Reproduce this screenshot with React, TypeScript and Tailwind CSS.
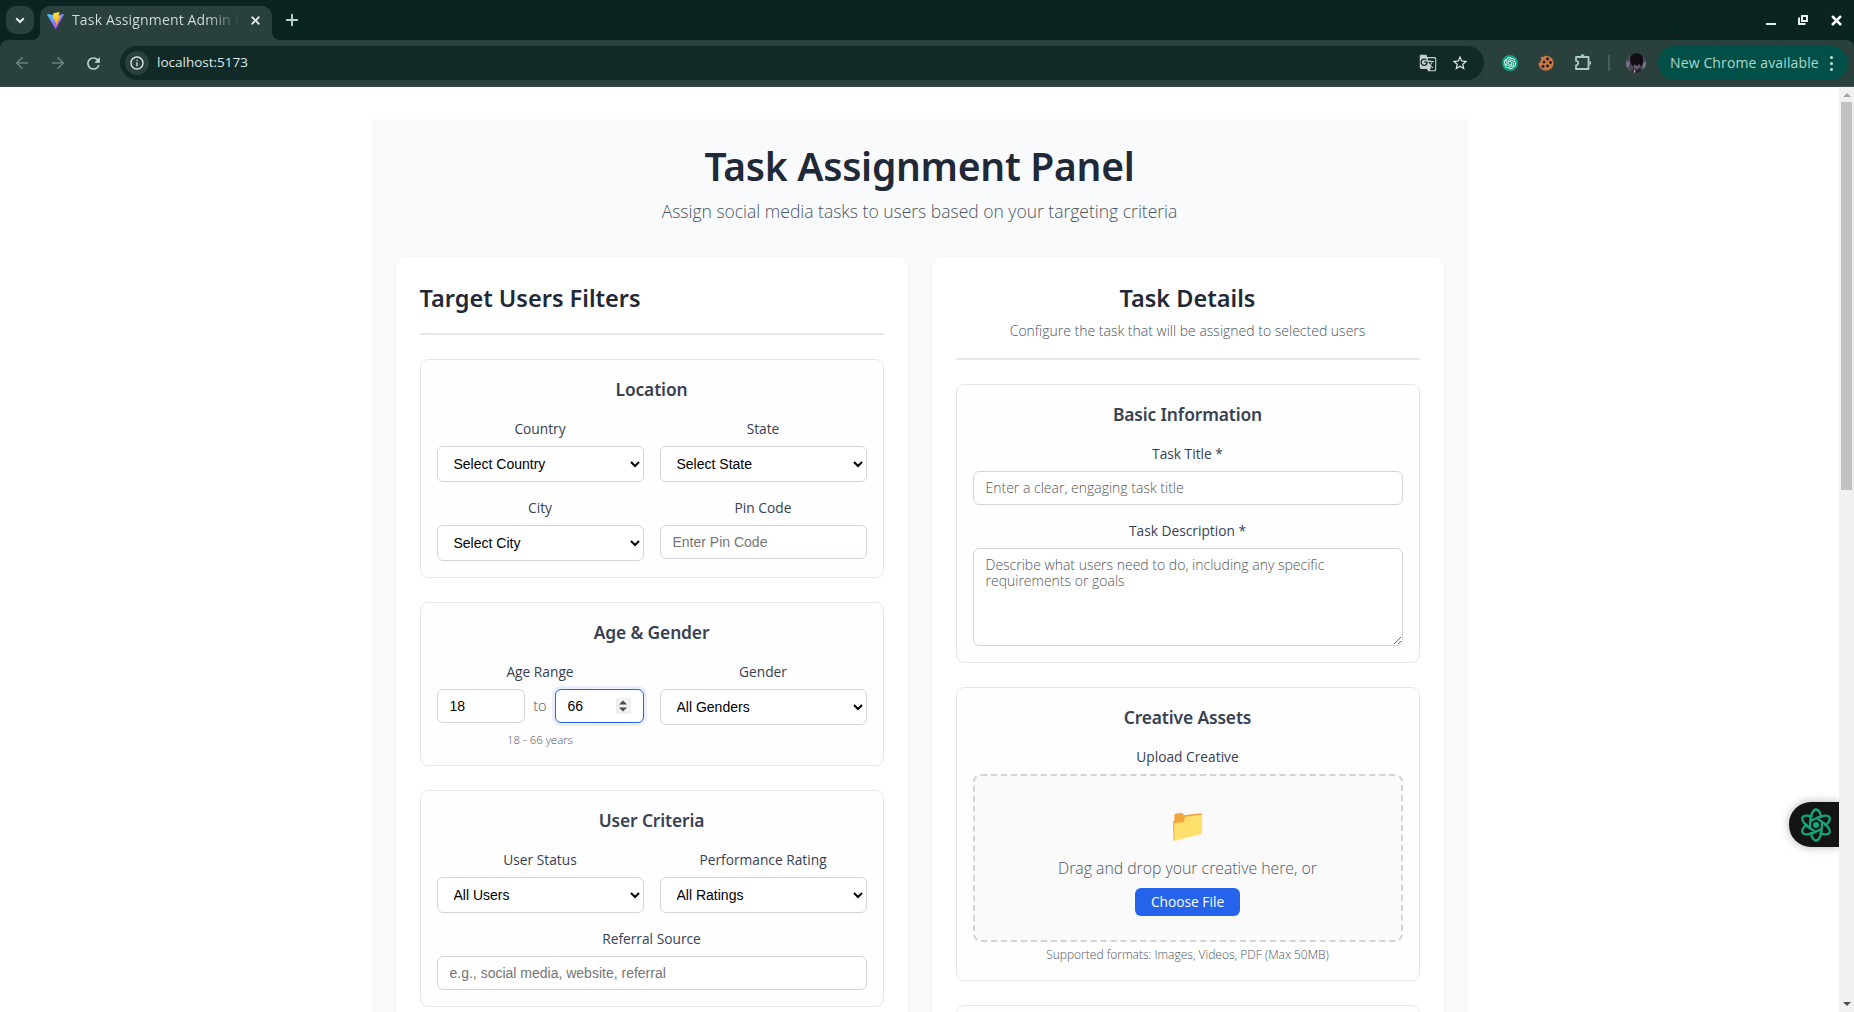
import React from "react";
import { ArrowLeft, ArrowRight, Plus, X } from "lucide-react";
import { MdGTranslate, MdInfoOutline, MdRefresh, MdStarOutline } from "react-icons/md";

function ViteLogo() {
  return (
    <svg viewBox="0 0 32 32" className="h-[17px] w-[17px] shrink-0">
      <defs>
        <linearGradient id="va" x1="0" y1="0" x2="0.7" y2="1">
          <stop offset="0" stopColor="#41d1ff" />
          <stop offset="1" stopColor="#bd34fe" />
        </linearGradient>
        <linearGradient id="vb" x1="0.4" y1="0" x2="0.6" y2="1">
          <stop offset="0" stopColor="#ffea83" />
          <stop offset="0.1" stopColor="#ffdd35" />
          <stop offset="1" stopColor="#ffa800" />
        </linearGradient>
      </defs>
      <path fill="url(#va)" d="M31.8 5.2 17 31.5a.9.9 0 0 1-1.6 0L.3 5.2A.9.9 0 0 1 1.2 3.800l14.800 2.600 14.900-2.600a.9.9 0 0 1 .9 1.400Z" />
      <path fill="url(#vb)" d="M23 .1 12.200 2.200a.4.4 0 0 0-.3.4l-.7 11.200a.4.4 0 0 0 .5.4l3-.7a.4.4 0 0 1 .5.5l-.9 4.400a.4.4 0 0 0 .5.5l1.900-.6a.4.4 0 0 1 .5.5l-1.400 6.900c-.1.4.5.700.8.300l.1-.3 8.800-17.500a.4.4 0 0 0-.4-.6l-3.100.6a.4.4 0 0 1-.5-.5l2-7a.4.4 0 0 0-.5-.6Z" />
    </svg>
  );
}

function Knot({ className }: { className: string }) {
  return (
    <svg viewBox="0 0 24 24" className={className} fill="currentColor">
      <path d="M22.282 9.821a5.985 5.985 0 0 0-.516-4.910 6.046 6.046 0 0 0-6.510-2.900A6.065 6.065 0 0 0 4.981 4.182a5.985 5.985 0 0 0-3.998 2.900 6.046 6.046 0 0 0 .743 7.097 5.980 5.980 0 0 0 .510 4.911 6.051 6.051 0 0 0 6.515 2.900A5.985 5.985 0 0 0 13.260 24a6.056 6.056 0 0 0 5.772-4.206 5.990 5.990 0 0 0 3.998-2.900 6.056 6.056 0 0 0-.748-7.073zM13.260 22.430a4.476 4.476 0 0 1-2.876-1.041l.142-.080 4.778-2.758a.795.795 0 0 0 .393-.682v-6.737l2.020 1.169a.071.071 0 0 1 .038.052v5.583a4.504 4.504 0 0 1-4.495 4.494zM3.600 18.304a4.471 4.471 0 0 1-.535-3.014l.142.085 4.783 2.758a.771.771 0 0 0 .780 0l5.843-3.368v2.332a.080.080 0 0 1-.033.062L9.740 19.950a4.500 4.500 0 0 1-6.140-1.646zM2.341 7.896a4.485 4.485 0 0 1 2.365-1.973V11.600a.766.766 0 0 0 .388.676l5.814 3.355-2.020 1.168a.076.076 0 0 1-.071 0l-4.830-2.786A4.504 4.504 0 0 1 2.341 7.872zm16.597 3.856-5.833-3.387L15.119 7.200a.076.076 0 0 1 .071 0l4.830 2.791a4.494 4.494 0 0 1-.676 8.105v-5.678a.790.790 0 0 0-.407-.667zm2.010-3.023-.142-.085-4.773-2.782a.776.776 0 0 0-.785 0L9.409 9.230V6.897a.066.066 0 0 1 .028-.061l4.830-2.787a4.499 4.499 0 0 1 6.680 4.660zM8.306 12.863l-2.020-1.164a.080.080 0 0 1-.038-.057V6.074a4.499 4.499 0 0 1 7.376-3.453l-.142.080L8.704 5.459a.795.795 0 0 0-.393.682zm1.097-2.365 2.602-1.500 2.607 1.500v2.999l-2.597 1.500-2.607-1.500z" />
    </svg>
  );
}

function Cookie() {
  return (
    <svg viewBox="0 0 16 16" className="h-4 w-4">
      <path fill="#c67947" d="M4 1.200c.8 1.300 2 .9 2.600-.4C11 0 15.600 3 15.600 8c0 4.400-3.400 7.600-7.600 7.600S.4 12.400.4 8.300c1.500 0 2-1 1.500-2.300C3.800 5.800 3.700 3.700 2.600 3.300Z" />
      <g fill="#1d1712">
        <circle cx="9.500" cy="4" r="1.400" />
        <circle cx="6" cy="7" r="1.300" />
        <circle cx="12.500" cy="7.500" r="1.400" />
        <circle cx="5" cy="11.500" r="1.400" />
        <circle cx="9.500" cy="11" r="1.400" />
      </g>
    </svg>
  );
}

function Avatar() {
  return (
    <svg viewBox="0 0 20 20" className="h-5 w-5">
      <defs>
        <clipPath id="av"><circle cx="10" cy="10" r="10" /></clipPath>
      </defs>
      <g clipPath="url(#av)">
        <rect width="20" height="20" fill="#4b4a5c" />
        <path fill="#77748b" d="M0 7l4 3-2 5H0ZM20 8l-4 3 1 5 3-2Z" />
        <path fill="#100d14" d="M5 2 9 0h5l3 4v7l-2 3-1-3-3 2-3-2-1 3-2-3-1-5Z" />
        <path fill="#6d5a66" d="M8 12l3 1 3-2-1 4-3 1-2-2Z" />
        <path fill="#25222f" d="M4 20l4-5 3 2 3-2 3 5Z" />
        <path fill="#c39a86" d="m8 16 1.500 1.500L9 20H7.500Z" />
      </g>
    </svg>
  );
}

function Browser() {
  return (
    <header className="h-[87px] shrink-0 bg-[#0a2421] font-['Open_Sans',sans-serif]">
      <div className="flex h-10 items-start pt-1.5 pl-1.5">
        <div className="flex h-7 w-7 items-center justify-center rounded-[10px] bg-[#29403d]">
          <svg viewBox="0 0 10 10" className="h-2.5 w-2.5" fill="none" stroke="#e0ebe9" strokeWidth="2"><path d="m1.200 3.200 3.800 3.800 3.800-3.800" /></svg>
        </div>
        <div className="relative ml-1.5 flex h-[34px] w-[232px] items-center rounded-t-[10px] bg-[#29403d] pb-1.5 pl-[7px]">
          <svg viewBox="0 0 8 8" className="absolute bottom-0 -left-2 h-2 w-2"><path d="M8 0v8H0a8 8 0 0 0 8-8Z" fill="#29403d" /></svg>
          <svg viewBox="0 0 8 8" className="absolute -right-2 bottom-0 h-2 w-2"><path d="M0 0v8h8a8 8 0 0 1-8-8Z" fill="#29403d" /></svg>
          <ViteLogo />
          <span className="ml-2 w-[168px] overflow-hidden bg-linear-to-r from-[#d4e0de] from-80% to-transparent to-100% bg-clip-text text-[14px] leading-5 tracking-[0.155px] whitespace-nowrap text-transparent">Task Assignment Admin P</span>
          <X className="ml-[9px] h-[13px] w-[13px] text-[#e0ebe9]" strokeWidth={3.300} />
        </div>
        <Plus className="mt-1 ml-2.5 h-5 w-5 p-[1px] text-[#bcd0cc]" strokeWidth={2.6} />
        <div className="mr-2.5 ml-auto flex h-7 items-center text-white">
          <span className="mt-2 mr-[22px] h-0.5 w-2.5 bg-[#e8f0ee]" />
          <svg viewBox="0 0 10 10" className="mr-[21px] h-2.5 w-2.5" fill="none" stroke="#e8f0ee" strokeWidth="2"><path d="M4 1h5v5H4ZM1 2.500V9h6.500" /></svg>
          <X className="h-[15px] w-[15px]" strokeWidth={4} />
        </div>
      </div>
      <div className="flex h-[47px] items-center rounded-t-lg border-b border-[#3b504d] bg-[#29403d]">
        <ArrowLeft className="ml-[13px] h-[18px] w-[18px] text-[#6a7f7b]" strokeWidth={2.300} />
        <ArrowRight className="ml-[18px] h-[18px] w-[18px] text-[#6a7f7b]" strokeWidth={2.300} />
        <MdRefresh className="ml-[17px] h-[19px] w-[19px] text-[#c0dcd6]" />
        <div className="ml-[17px] flex h-[34px] w-[1364px] items-center rounded-full bg-[#112a27] pl-[5px]">
          <span className="flex h-6 w-6 items-center justify-center rounded-full bg-[#29403d]">
            <MdInfoOutline className="h-4 w-4 text-[#dde9e7]" />
          </span>
          <span className="ml-2 pb-0.5 text-[13.5px] text-[#dce8e6]">localhost:5173</span>
          <MdGTranslate className="ml-auto h-[18px] w-[18px] text-[#c3cfcd]" />
          <MdStarOutline className="mr-[15px] ml-[14px] h-[18px] w-[18px] text-[#dce8e6]" />
        </div>
        <span className="ml-[18px] flex h-4 w-4 items-center justify-center rounded-full bg-[#10a37f] text-white">
          <Knot className="h-3 w-3" />
        </span>
        <span className="ml-5"><Cookie /></span>
        <svg viewBox="0 0 18 18" className="ml-5 h-[18px] w-[18px]" fill="none" stroke="#a9cbc4" strokeWidth="1.800" strokeLinejoin="round">
          <path d="M2 3h12.500v12H2v-3.700c3-.6 3-4 0-4.600Z" />
          <path d="M6.500 2.300a2 2 0 0 1 4 0ZM15.300 7a2 2 0 0 1 0 4Z" fill="#a9cbc4" stroke="none" />
        </svg>
        <span className="ml-4 h-4 w-0.5 bg-[#40605b]" />
        <span className="ml-4"><Avatar /></span>
        <div className="ml-3 flex h-[34px] w-[190px] items-center rounded-full bg-[#005047] pl-3 text-[#a9d8cf]">
          <span className="pb-0.5 text-[14px] tracking-[0.13px] whitespace-nowrap">New Chrome available</span>
          <span className="ml-[11px] flex flex-col gap-[3px]">
            <i className="h-[3px] w-[3px] rounded-full bg-[#bfe5dd]" />
            <i className="h-[3px] w-[3px] rounded-full bg-[#bfe5dd]" />
            <i className="h-[3px] w-[3px] rounded-full bg-[#bfe5dd]" />
          </span>
        </div>
      </div>
    </header>
  );
}

const control =
  "block w-full rounded-md border border-[#d1d5db] bg-white text-[14px] text-black outline-none";
const arial = "font-['Liberation_Sans',Arial,sans-serif] placeholder:text-[#757575]";
const light = "font-['Open_Sans',sans-serif] font-light placeholder:text-[#555555]";
const heading = "font-['Noto_Sans',sans-serif] font-semibold";

function Section({ title, children }: { title?: string; children?: React.ReactNode }) {
  return (
    <section className="mb-6 min-h-20 rounded-lg border border-[#e5e7eb] bg-[#fefefe] p-4">
      {title && (
        <h3 className={`${heading} mb-4 h-[27px] text-center text-[17.4px] leading-[27px] tracking-[-0.13px] text-[#374151]`}>{title}</h3>
      )}
      {children}
    </section>
  );
}

function Field({ label, className = "", children }: { label: string; className?: string; children: React.ReactNode }) {
  return (
    <div className={className}>
      <label className="mb-2 block text-center text-[13.75px] leading-[19px] font-medium text-[#374151]">{label}</label>
      {children}
    </div>
  );
}

function Select({ value }: { value: string }) {
  return (
    <select className={`${control} ${arial} h-9 px-3`}>
      <option>{value}</option>
    </select>
  );
}

function Folder() {
  return (
    <svg viewBox="0 0 30 30" className="h-[30px] w-[30px]">
      <path fill="#f2a63f" d="M.6 28.500 0 10 1.400 8V3q0-1.300 1.300-1.500L9 .9q1.500 0 1.600 1.400v1L28 1.200q1 0 1 1v5L1 28.700Z" />
      <path fill="#ffe06c" d="M1.300 12q0-1 1-1.100l7.700-.7q1.200-.1 1.300-1.300l.4-3q.1-1 1.200-1.200L28 2.900q1-.1 1 .9v17q0 1-1 1.300L1.300 28.900Z" />
    </svg>
  );
}

function Filters() {
  return (
    <div className="rounded-xl bg-white p-6 shadow-[0_1px_3px_rgba(0,0,0,0.1)]">
      <div className="mb-6 border-b-2 border-[#e5e7eb] pb-[17px]">
        <h2 className={`${heading} h-[35px] text-[23.5px] leading-[35px] text-[#1f2937]`}>Target Users Filters</h2>
      </div>
      <Section title="Location">
        <div className="grid grid-cols-2 gap-4">
          <Field label="Country"><Select value="Select Country" /></Field>
          <Field label="State"><Select value="Select State" /></Field>
          <Field label="City"><Select value="Select City" /></Field>
          <Field label="Pin Code"><input className={`${control} ${arial} h-[34px] px-3`} placeholder="Enter Pin Code" /></Field>
        </div>
      </Section>
      <Section title="Age &amp; Gender">
        <div className="grid grid-cols-2 gap-4">
          <Field label="Age Range">
            <div className="flex items-center gap-2">
              <input className={`${control} ${arial} h-[34px] min-w-0 flex-1 px-3`} defaultValue="18" />
              <span className={`${light} text-[14.500px] text-[#4b5563]`}>to</span>
              <div className={`${arial} flex h-[34px] w-[89px] items-center rounded-md border border-[#2563eb] bg-white pr-3 pl-3 text-[14px] text-black shadow-[0_0_0_3px_rgba(37,99,235,0.1)]`}>
                66
                <span className="ml-auto flex h-4 w-[15px] items-center justify-center bg-[#efefef]">
                  <svg viewBox="0 0 8 12" className="h-3 w-2" fill="#4a4a4a"><path d="M0 4.500 4 0.500 8 4.500ZM0 7.500l4 4 4-4Z" /></svg>
                </span>
              </div>
            </div>
            <p className={`${light} mt-2 text-center text-[11.4px] leading-[18px] text-[#4b5563]`}>18 - 66 years</p>
          </Field>
          <Field label="Gender"><Select value="All Genders" /></Field>
        </div>
      </Section>
      <Section title="User Criteria">
        <div className="grid grid-cols-2 gap-4">
          <Field label="User Status"><Select value="All Users" /></Field>
          <Field label="Performance Rating"><Select value="All Ratings" /></Field>
          <Field label="Referral Source" className="col-span-2">
            <input className={`${control} ${arial} h-[34px] px-3`} placeholder="e.g., social media, website, referral" />
          </Field>
        </div>
      </Section>
    </div>
  );
}

function Details() {
  return (
    <div className="rounded-xl bg-white p-6 shadow-[0_1px_3px_rgba(0,0,0,0.1)]">
      <div className="mb-6 border-b-2 border-[#e5e7eb] pb-[17px] text-center">
        <h2 className={`${heading} mb-1 h-[35px] text-[23.5px] leading-[35px] text-[#1f2937]`}>Task Details</h2>
        <p className={`${light} text-[14px] leading-[21px] text-[#4b5563]`}>Configure the task that will be assigned to selected users</p>
      </div>
      <Section title="Basic Information">
        <div className="flex flex-col gap-4">
          <Field label="Task Title *"><input className={`${control} ${light} h-[34px] px-3 pb-0.5`} placeholder="Enter a clear, engaging task title" /></Field>
          <Field label="Task Description *">
            <textarea className={`${control} ${light} h-[98px] resize-y px-3 py-2 leading-4`} placeholder="Describe what users need to do, including any specific requirements or goals" />
          </Field>
        </div>
      </Section>
      <Section title="Creative Assets">
        <Field label="Upload Creative">
          <div className="flex h-[168px] flex-col items-center rounded-lg border-2 border-dashed border-[#d1d5db] bg-[#fafafa] pt-9">
            <Folder />
            <p className={`${light} mt-3.5 text-[15.8px] leading-6 text-[#4b5563]`}>Drag and drop your creative here, or</p>
            <button className="mt-2 h-7 w-[105px] rounded-md bg-[#2563eb] text-[13.75px] font-medium text-white">Choose File</button>
          </div>
          <p className={`${light} mt-1 text-center text-[12px] leading-[18px] text-[#4b5563]`}>Supported formats: Images, Videos, PDF (Max 50MB)</p>
        </Field>
      </Section>
      <Section />
    </div>
  );
}

function AssistantTab() {
  return (
    <div className="absolute top-[715px] right-0 flex h-[45px] w-[50px] items-center rounded-l-[22px] bg-[#141414] pl-[11px] shadow-[0_0_10px_rgba(0,0,0,0.3)]">
      <svg viewBox="-16 -17 32 34" className="h-[34px] w-8" fill="none" stroke="#12a87c" strokeWidth="2.300">
        <circle r="3" fill="#12a87c" stroke="none" />
        <ellipse rx="6" ry="15.500" pathLength="100" strokeDasharray="43 7" strokeDashoffset="3" />
        <ellipse rx="6" ry="15.500" pathLength="100" strokeDasharray="43 7" strokeDashoffset="3" transform="rotate(60)" />
        <ellipse rx="6" ry="15.500" pathLength="100" strokeDasharray="43 7" strokeDashoffset="3" transform="rotate(120)" />
      </svg>
    </div>
  );
}

export default function App() {
  return (
    <div className="flex h-[1012px] w-[1854px] flex-col overflow-hidden bg-white">
      <Browser />
      <div className="flex min-h-0 flex-1">
        <main className="relative flex-1 overflow-hidden pt-8 font-['Open_Sans',sans-serif]">
          <div className="mx-auto w-[1096px] bg-[#f9fafb] p-6">
            <div className="text-center">
              <h1 className={`${heading} h-[46px] text-[39px] leading-[46px] tracking-[-0.28px] text-[#1f2937]`}>Task Assignment Panel</h1>
              <p className={`${light} mt-2 mb-8 h-7 text-[17.5px] leading-7 text-[#4b5563]`}>Assign social media tasks to users based on your targeting criteria</p>
            </div>
            <div className="grid grid-cols-2 gap-6">
              <Filters />
              <Details />
            </div>
          </div>
          <AssistantTab />
        </main>
        <aside className="flex w-[15px] flex-col items-center bg-[#f1f1f1]">
          <svg viewBox="0 0 8 4" className="mt-1.5 h-1 w-2" fill="#a3a3a3"><path d="m0 4 4-4 4 4Z" /></svg>
          <div className="mt-[5px] h-[388px] w-[11px] bg-[#c1c1c1]" />
          <svg viewBox="0 0 8 4" className="mt-auto mb-1.5 h-1 w-2" fill="#505050"><path d="m0 0 4 4 4-4Z" /></svg>
        </aside>
      </div>
    </div>
  );
}
